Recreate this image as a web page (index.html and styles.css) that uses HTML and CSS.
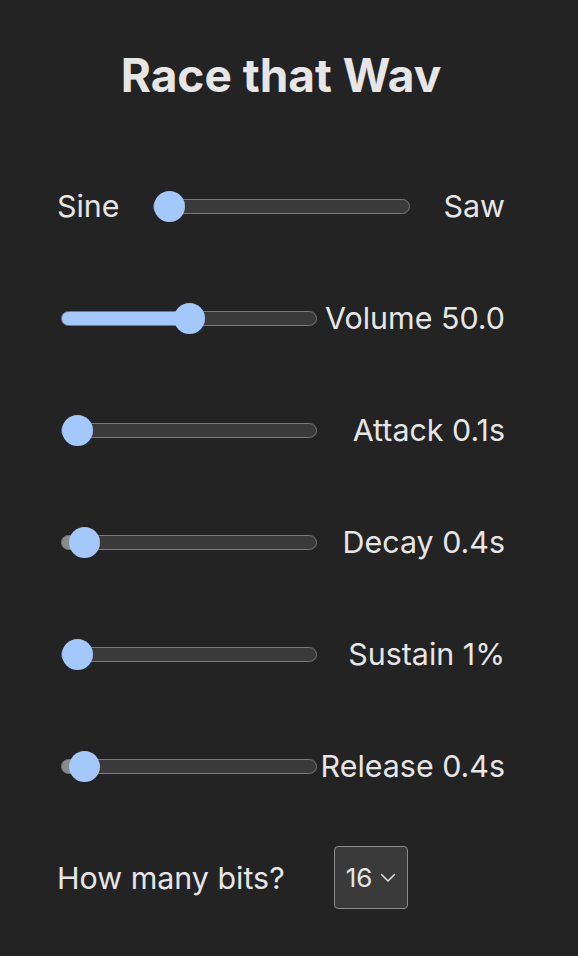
FILE: index.html
```html
<!DOCTYPE html>
<html>
<head>
<meta charset="utf-8">
<link rel="stylesheet" href="styles.css">
</head>
<body>
<main class="app">
  <h1 class="title">Race that Wav</h1>
  <div class="row row-wave">
    <span class="label">Sine</span>
    <input class="slider wide" type="range" min="0" max="1" step="0.01" value="0" style="background: linear-gradient(to right, #a4c8fc 0%, #3a3a3a 0%)">
    <span class="label">Saw</span>
  </div>
  <div class="row">
    <input class="slider" type="range" min="0" max="100" value="50" style="background: linear-gradient(to right, #a4c8fc 50%, #3a3a3a 50%)">
    <span class="label">Volume 50.0</span>
  </div>
  <div class="row">
    <input class="slider" type="range" min="0.1" max="10" step="0.1" value="0.1" style="background: linear-gradient(to right, #a4c8fc 0%, #3a3a3a 0%)">
    <span class="label">Attack 0.1s</span>
  </div>
  <div class="row">
    <input class="slider" type="range" min="0" max="12" step="0.1" value="0.4" style="background: linear-gradient(to right, #8a8a8a 4%, #3a3a3a 4%)">
    <span class="label">Decay 0.4s</span>
  </div>
  <div class="row">
    <input class="slider" type="range" min="0" max="100" value="0" style="background: linear-gradient(to right, #a4c8fc 0%, #3a3a3a 0%)">
    <span class="label">Sustain 1%</span>
  </div>
  <div class="row">
    <input class="slider" type="range" min="0" max="12" step="0.1" value="0.4" style="background: linear-gradient(to right, #8a8a8a 4%, #3a3a3a 4%)">
    <span class="label">Release 0.4s</span>
  </div>
  <div class="row row-bits">
    <span class="label">How many bits?</span>
    <div class="select">
      <span>16</span>
      <svg class="chev" width="16" height="10" viewBox="0 0 16 10"><path d="M1.5 1.5 L8 8 L14.5 1.5" fill="none" stroke="#e6e6e6" stroke-width="1.5" stroke-linecap="round" stroke-linejoin="round"/></svg>
    </div>
  </div>
</main>
</body>
</html>
```
FILE: styles.css
```css
html, body {
  margin: 0;
  padding: 0;
  background: #232323;
}
body {
  font-family: Inter, "Noto Sans", sans-serif;
  color: #e6e6e6;
}
.app {
  width: 448px;
  margin: 0 0 0 57px;
  display: flex;
  flex-direction: column;
}
.title {
  margin: 47px 0 0;
  text-align: center;
  font-size: 46px;
  font-weight: 700;
  line-height: 56px;
  letter-spacing: 0;
}
.row {
  display: flex;
  align-items: center;
  justify-content: space-between;
  height: 40px;
  margin-top: 72px;
}
.row-wave {
  margin-top: 83px;
}
.label {
  font-size: 30.4px;
  line-height: 40px;
}
.slider {
  -webkit-appearance: none;
  appearance: none;
  width: 256px;
  height: 15px;
  margin: 0 0 0 4px;
  border: 1.5px solid #7a7a7a;
  border-radius: 8px;
  box-sizing: border-box;
  background: #3a3a3a;
  outline: none;
}
.slider.wide {
  width: 257px;
  margin-left: 0;
}
.slider::-webkit-slider-runnable-track {
  height: 12px;
}
.slider::-webkit-slider-thumb {
  -webkit-appearance: none;
  appearance: none;
  width: 31px;
  height: 31px;
  margin-top: -9.5px;
  border-radius: 50%;
  background: #a4c8fc;
  border: none;
}
.row-bits {
  justify-content: flex-start;
  margin-top: 60px;
  height: 63px;
}
.select {
  margin-left: 49px;
  width: 74px;
  height: 63px;
  box-sizing: border-box;
  border: 1.5px solid #8a8a8a;
  border-radius: 4px;
  background: #3a3a3a;
  display: flex;
  align-items: center;
  padding-left: 11px;
  gap: 8px;
  font-size: 26px;
}
.chev {
  margin-top: 1px;
}
```
